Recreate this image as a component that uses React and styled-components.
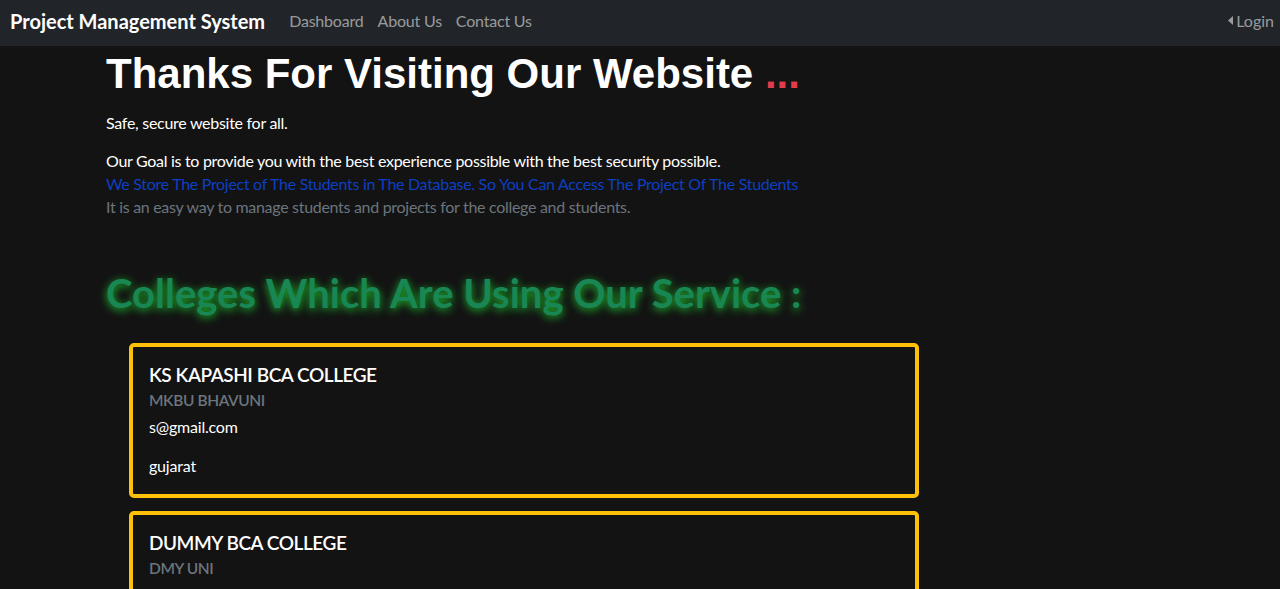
import React from "react";
import styled, { createGlobalStyle } from "styled-components";

const GlobalStyle = createGlobalStyle`
  * {
    box-sizing: border-box;
  }
  body {
    margin: 0;
    background-color: #131313;
    font-family: "Lato", "Open Sans", sans-serif;
    color: #ffffff;
  }
`;

const Navbar = styled.nav`
  display: flex;
  align-items: center;
  justify-content: space-between;
  height: 46px;
  padding: 0 6px 5px 10px;
  background-color: #212529;
`;

const NavLeft = styled.div`
  display: flex;
  align-items: center;
`;

const Brand = styled.a`
  font-size: 20px;
  font-weight: 700;
  color: #ffffff;
  margin-right: 17px;
  text-decoration: none;
`;

const NavLink = styled.a`
  font-size: 16px;
  color: rgba(255, 255, 255, 0.55);
  padding: 0 7px;
  letter-spacing: -0.2px;
  text-decoration: none;
`;

const LoginLink = styled.a`
  display: flex;
  align-items: center;
  gap: 3px;
  font-size: 16px;
  color: rgba(255, 255, 255, 0.55);
  text-decoration: none;
`;

const Main = styled.main`
  padding: 3px 0 0 106px;
`;

const Title = styled.h1`
  margin: 0 0 12px;
  font-family: "Liberation Sans", Arial, sans-serif;
  font-size: 42px;
  font-weight: 700;
  line-height: 1.2;
  color: #ffffff;
`;

const Dots = styled.span`
  color: #e23b4b;
`;

const Lead = styled.p`
  margin: 0 0 14px;
  font-size: 16px;
  line-height: 24px;
  letter-spacing: -0.28px;
`;

const Info = styled.div`
  font-size: 16px;
  line-height: 23px;
  letter-spacing: -0.3px;
`;

const InfoLine = styled.div`
  color: ${(p) => p.color || "#ffffff"};
`;

const SectionTitle = styled.h2`
  margin: 51px 0 26px;
  font-size: 40px;
  font-weight: 700;
  line-height: 1.2;
  color: #198754;
  text-shadow: 0 2px 8px #1ec52f;
`;

const CardList = styled.div`
  display: flex;
  flex-direction: column;
  gap: 13px;
  padding-left: 23px;
`;

const Card = styled.div`
  width: 790px;
  border: 4px solid #ffc107;
  border-radius: 5px;
  padding: 16px;
`;

const CardTitle = styled.h5`
  margin: 0 0 4px;
  font-size: 19px;
  font-weight: 600;
  line-height: 24px;
  letter-spacing: -0.45px;
`;

const CardSubtitle = styled.h6`
  margin: 0 0 5px;
  font-size: 15.5px;
  font-weight: 600;
  line-height: 19px;
  letter-spacing: -0.4px;
  color: #6c757d;
`;

const CardText = styled.p`
  margin: 0 0 15px;
  font-size: 16px;
  line-height: 24px;
  letter-spacing: -0.2px;
  &:last-child {
    margin-bottom: 0;
  }
`;

const colleges = [
  { name: "KS KAPASHI BCA COLLEGE", uni: "MKBU BHAVUNI", email: "s@gmail.com", state: "gujarat" },
  { name: "DUMMY BCA COLLEGE", uni: "DMY UNI", email: "d@gmail.com", state: "gujarat" }
];

const App = () => {
  return (
    <>
      <GlobalStyle />
      <Navbar>
        <NavLeft>
          <Brand href="#">Project Management System</Brand>
          <NavLink href="#">Dashboard</NavLink>
          <NavLink href="#">About Us</NavLink>
          <NavLink href="#">Contact Us</NavLink>
        </NavLeft>
        <LoginLink href="#">
          <svg width="5" height="9" viewBox="0 0 5 9">
            <path d="M5 0 L0 4.5 L5 9 Z" fill="currentColor" />
          </svg>
          Login
        </LoginLink>
      </Navbar>
      <Main>
        <Title>
          Thanks For Visiting Our Website <Dots>...</Dots>
        </Title>
        <Lead>Safe, secure website for all.</Lead>
        <Info>
          <InfoLine>Our Goal is to provide you with the best experience possible with the best security possible.</InfoLine>
          <InfoLine color="#0d3fc2">
            We Store The Project of The Students in The Database. So You Can Access The Project Of The Students
          </InfoLine>
          <InfoLine color="#6c757d">
            It is an easy way to manage students and projects for the college and students.
          </InfoLine>
        </Info>
        <SectionTitle>Colleges Which Are Using Our Service :</SectionTitle>
        <CardList>
          {colleges.map((c) => (
            <Card key={c.name}>
              <CardTitle>{c.name}</CardTitle>
              <CardSubtitle>{c.uni}</CardSubtitle>
              <CardText>{c.email}</CardText>
              <CardText>{c.state}</CardText>
            </Card>
          ))}
        </CardList>
      </Main>
    </>
  );
};

export default App;
